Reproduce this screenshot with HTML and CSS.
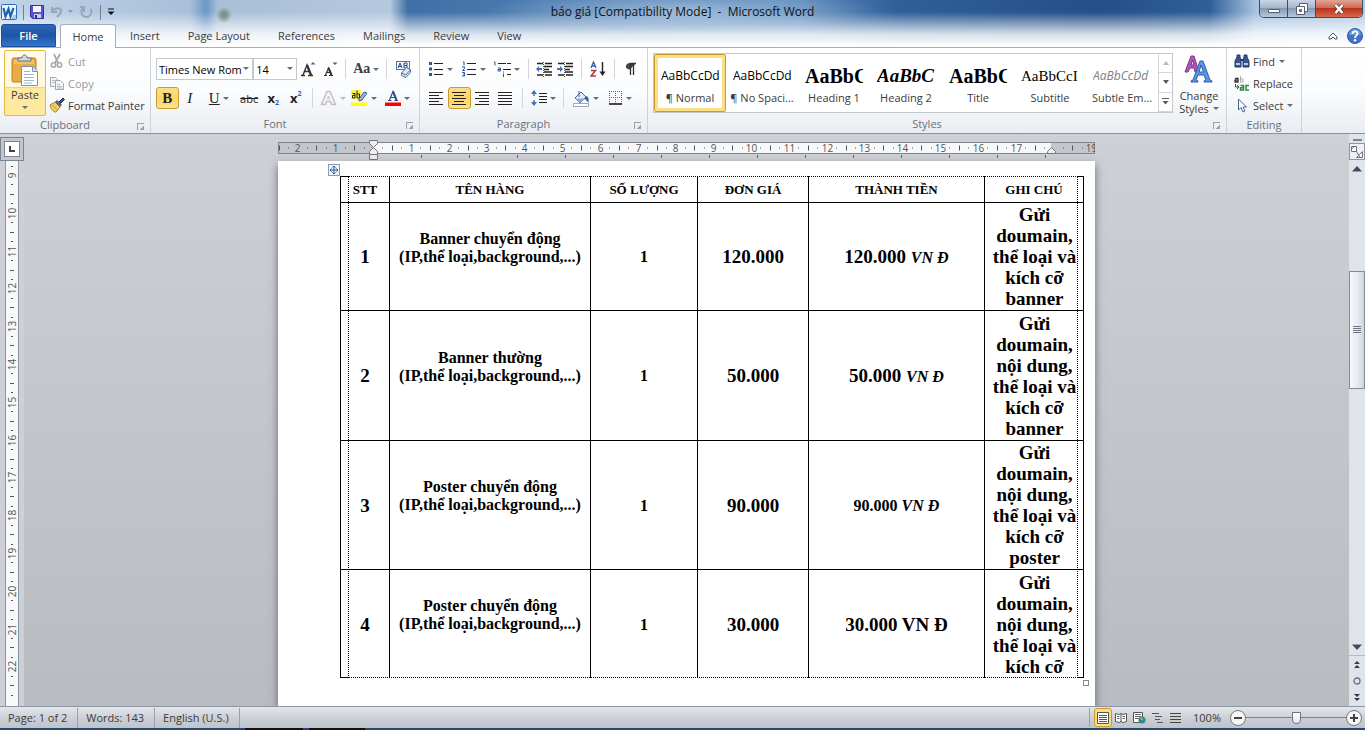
FILE: index.html
```html
<!DOCTYPE html>
<html lang="vi">
<head>
    <meta charset="UTF-8">
    <title>báo giá [Compatibility Mode] - Microsoft Word</title>
    <link rel="stylesheet" href="styles.css">
</head>
<body>
    <header class="titlebar">
        <div class="quick">
            <svg class="logo" width="16" height="16" viewBox="0 0 16 16"><rect x=".5" y=".5" width="15" height="15" rx="1" fill="#eaf3fc" stroke="#2b6cb8"/><path d="M2.500 4l2 8.500 3-7.500 2 7.500L12.500 4" fill="none" stroke="#1b62b5" stroke-width="2.200"/><path d="M11 14h4M12 12h3" stroke="#5b9bd8"/></svg>
            <i class="qsep"></i>
            <button title="Save"><svg width="14" height="14" viewBox="0 0 14 14"><path d="M.5.5h13v13h-11l-2-2z" fill="#5a55c4" stroke="#37338f"/><path d="M3 1h8v6H3z" fill="#f3f6ff"/><path d="M4 9h7v4H4z" fill="#c9cdf0"/><path d="M5 10h2v3H5z" fill="#2f2b80"/></svg></button>
            <button class="undo" title="Undo"><svg width="24" height="14" viewBox="0 0 24 14"><path d="M2 2v5h5M2.500 6C5 2.500 11 2 11 6c0 3-2 4-4 6" fill="none" stroke="#9aa5b5" stroke-width="2"/><path d="M18 5h5l-2.500 3z" fill="#8d97a6"/></svg></button>
            <button title="Repeat"><svg width="14" height="14" viewBox="0 0 14 14"><path d="M4 2.500a5 5 0 1 0 6.500 1.500M4 7V2H0" fill="none" stroke="#9aa5b5" stroke-width="2"/></svg></button>
            <i class="qsep"></i>
            <button title="Customize"><svg width="8" height="8" viewBox="0 0 8 8"><path d="M1 1h6" stroke="#111"/><path d="M.5 3.500h7L4 7z" fill="#111"/></svg></button>
        </div>
        <div class="caption">báo giá [Compatibility Mode] &nbsp;- &nbsp;Microsoft Word</div>
        <div class="winbtns">
            <button title="Minimize"><svg width="12" height="12" viewBox="0 0 12 12"><path d="M.5 6.500h11v3H.5z" fill="#fff" stroke="#555f70"/></svg></button>
            <button title="Restore"><svg width="12" height="12" viewBox="0 0 12 12"><path d="M3.500.5h8v8h-8z" fill="#fff" stroke="#555f70"/><path d="M.5 3.500h8v8h-8z" fill="#fff" stroke="#555f70"/><path d="M3.500 6.500h2v2h-2z" fill="#8a94a5" stroke="#555f70"/></svg></button>
            <button class="close" title="Close"><svg width="12" height="12" viewBox="0 0 12 12"><path d="M2.500 2l7 8M9.500 2l-7 8" stroke="#5b3434" stroke-width="4"/><path d="M2.500 2l7 8M9.500 2l-7 8" stroke="#fff" stroke-width="2.500"/></svg></button>
        </div>
    </header>

    <nav class="tabs">
        <button class="file">File</button>
        <button class="active">Home</button>
        <button>Insert</button>
        <button>Page Layout</button>
        <button>References</button>
        <button>Mailings</button>
        <button>Review</button>
        <button>View</button>
        <span class="tabtools">
            <button title="Minimize the Ribbon"><svg width="10" height="8" viewBox="0 0 10 8"><path d="M1 5l4-4 4 4v2H7L5 5 3 7H1z" fill="#fff" stroke="#4a5260"/></svg></button>
            <button title="Help"><svg width="16" height="16" viewBox="0 0 16 16"><circle cx="8" cy="8" r="7.500" fill="#3f74c9" stroke="#2c5aa5"/><path d="M2 7a6 6 0 0 1 12 0z" fill="#6b9ae0"/><path d="M5.500 6c0-3.500 5-3.500 5-.5C10.500 7.500 8 7.500 8 10" fill="none" stroke="#fff" stroke-width="1.800"/><circle cx="8" cy="12.300" r="1.200" fill="#fff"/></svg></button>
        </span>
    </nav>

    <section class="ribbon">
        <div class="group clipboard">
            <div class="gbody">
                <button class="paste">
                    <svg width="30" height="32" viewBox="0 0 30 32"><rect x="2" y="4" width="24" height="24" rx="1.500" fill="#e9ab45" stroke="#bd8024"/><path d="M4 6h20v4H4z" fill="#f1c06b"/><path d="M8 7V4h4c0-4 5-4 5 0h4v3z" fill="#d7dbe2" stroke="#68707e"/><path d="M11.500 12.500h11l5 5v14h-16z" fill="#fff" stroke="#7690b6"/><path d="M22.500 12.500v5h5" fill="#dbe6f4" stroke="#7690b6"/><path d="M14 17.500h6M14 20.500h10M14 23.500h10M14 26.500h10M14 29h8" stroke="#9fb3cf"/></svg>
                    <span class="dd">Paste</span>
                </button>
                <div class="stack">
                    <button class="off"><svg width="16" height="16" viewBox="0 0 16 16"><path d="M5 1l4 9M11 1L6 10" stroke="#a3a8af" stroke-width="1.800"/><circle cx="4.500" cy="12" r="2.200" fill="none" stroke="#a3a8af" stroke-width="1.500"/><circle cx="10.500" cy="12" r="2.200" fill="none" stroke="#a3a8af" stroke-width="1.500"/></svg>Cut</button>
                    <button class="off"><svg width="16" height="16" viewBox="0 0 16 16"><path d="M1.500 2.500h5l2 2v7h-7z" fill="#f4f5f7" stroke="#a3a8af"/><path d="M6.500 5.500h5l3 3v6h-8z" fill="#f4f5f7" stroke="#a3a8af"/><path d="M3 5.500h3M3 7.500h3M8 9.500h3M8 11.500h5M8 13h5" stroke="#b5b9c0"/></svg>Copy</button>
                    <button><svg width="16" height="16" viewBox="0 0 16 16"><path d="M1 8l5-3 5 5-4 5c-2 .5-5-2-6-7z" fill="#f0cf62" stroke="#a98527"/><path d="M3 8l5 5" stroke="#c79f37"/><path d="M6 5l2-2 5 5-2 2z" fill="#5c6575"/><path d="M10 5l4-4 1.500 1.500-4 4z" fill="#3f4f86" stroke="#26336b"/></svg>Format Painter</button>
                </div>
            </div>
            <div class="gtitle">Clipboard<i class="launch"></i></div>
        </div>

        <div class="group font">
            <div class="gbody rows">
                <div class="row">
                    <label class="combo name"><select aria-label="Font"><option>Times New Rom</option></select></label>
                    <label class="combo size"><select aria-label="Font size"><option>14</option></select></label>
                    <button class="ib w22" title="Grow Font"><svg width="16" height="16" viewBox="0 0 16 16"><path d="M1 14.500h4M8 14.500h5M3 14L7 4l4 10M4.500 10.500h5" fill="none" stroke="#333" stroke-width="1.400"/><path d="M7 4l4 10" stroke="#333" stroke-width="2.200"/><path d="M10.500 3.500h5L13 1z" fill="#3b62a8"/></svg></button>
                    <button class="ib w22" title="Shrink Font"><svg width="16" height="16" viewBox="0 0 16 16"><path d="M2 14.500h3M7 14.500h4M3.500 14L6.500 7l3 7M4.500 11.500h4" fill="none" stroke="#333" stroke-width="1.200"/><path d="M6.500 7l3 7" stroke="#333" stroke-width="2"/><path d="M10.500 1.500h5L13 4z" fill="#3b62a8"/></svg></button>
                    <i class="sep"></i>
                    <button class="ib dd aa" title="Change Case">Aa</button>
                    <i class="sep"></i>
                    <button class="ib w22" title="Clear Formatting"><svg width="17" height="17" viewBox="0 0 17 17"><rect x="1.500" y=".5" width="13" height="8" fill="#f5f8fd" stroke="#5873a5"/><path d="M3 7l2-5 2 5M3.500 5.500h3M9 7V2h3v2.500H9M12 4.500V7H9" fill="none" stroke="#2b4d8c"/><path d="M6.500 12l5-5.500 4 2v3l-4.500 5-4.500-2z" fill="#dfe6f3" stroke="#5873a5"/><path d="M6.500 12l4.500 2 4.500-5.500" fill="none" stroke="#5873a5"/></svg></button>
                </div>
                <div class="row">
                    <button class="ib on serif" title="Bold"><b>B</b></button>
                    <button class="ib serif" title="Italic"><i>I</i></button>
                    <button class="ib serif dd w36" title="Underline"><u>U</u></button>
                    <button class="ib w26 strike" title="Strikethrough"><s>abc</s></button>
                    <button class="ib xx" title="Subscript">x<sub>2</sub></button>
                    <button class="ib xx" title="Superscript">x<sup>2</sup></button>
                    <i class="sep"></i>
                    <button class="ib dd w30 off" title="Text Effects"><svg width="17" height="16" viewBox="0 0 17 16"><path d="M1.500 14.500L7 1.500h3l5.500 13h-4l-1-3h-4l-1 3z" fill="#f6f6f6" stroke="#bfc1c5" stroke-width="1.500"/><path d="M7.500 9h2l-1-3z" fill="#fff" stroke="#bfc1c5"/></svg></button>
                    <button class="ib dd w34" title="Highlight"><svg width="17" height="17" viewBox="0 0 17 17"><path d="M0 0h10v9H0z" fill="#fff44a"/><path d="M1.500 3.500h2.500V8H1.500V5.500H4M6 .5V8h2.500V4H6" fill="none" stroke="#222"/><path d="M8 9l5-7 3 1-5 7-3 1z" fill="#9cb3d8" stroke="#3f5c94"/><path d="M0 12.500h16V16H0z" fill="#ff0"/></svg></button>
                    <button class="ib dd w34" title="Font Color"><svg width="16" height="17" viewBox="0 0 16 17"><path d="M3 10.500h3.500M9.500 10.500H13M4.500 10L8 1.500 11.500 10M5.500 7.500h5" fill="none" stroke="#2c4f8f" stroke-width="1.200"/><path d="M8 1.500l3.500 8.500" stroke="#2c4f8f" stroke-width="2"/><path d="M0 12.500h16V16H0z" fill="#f00"/></svg></button>
                </div>
            </div>
            <div class="gtitle">Font<i class="launch"></i></div>
        </div>

        <div class="group para">
            <div class="gbody rows">
                <div class="row">
                    <button class="ib dd w34" title="Bullets"><svg width="15" height="14" viewBox="0 0 15 14"><path d="M0 0h3v3H0zM0 5.500h3v3H0zM0 11h3v3H0z" fill="#2f5597"/><path d="M5 1.500h9M5 7.500h9M5 12.500h9" stroke="#222"/></svg></button>
                    <button class="ib dd w34" title="Numbering"><svg width="15" height="16" viewBox="0 0 15 16"><path d="M1 1h1v3.500M0 6h2.500v1.500L.5 9.500H3M0 11.500h2.500v3.500H0M1 13.300h1" fill="none" stroke="#2f5597"/><path d="M5 2.500h9M5 8.500h9M5 13.500h9" stroke="#222"/></svg></button>
                    <button class="ib dd w34" title="Multilevel List"><svg width="17" height="16" viewBox="0 0 17 16"><path d="M0 1h1v3.500M4 7h2.500v3H4V8.500h2M9.500 10.500v1M9.500 12.500V16" fill="none" stroke="#2f5597"/><path d="M4 2.500h13M9 8.500h8M13 13.500h4" stroke="#222" stroke-dasharray="8 1"/></svg></button>
                    <i class="sep"></i>
                    <button class="ib w22" title="Decrease Indent"><svg width="17" height="15" viewBox="0 0 17 15"><path d="M1 1.500h6M9 1.500h7M8 4.500h8M8 7.500h5M8 10h8M1 13h6M9 13h7" stroke="#222" stroke-width="1.300"/><path d="M7.500 0v15" stroke="#555" stroke-dasharray="1 1"/><path d="M0 7l3-3v2h3v2H3v2z" fill="#3f70bd"/></svg></button>
                    <button class="ib w22" title="Increase Indent"><svg width="17" height="15" viewBox="0 0 17 15"><path d="M1 1.500h6M9 1.500h7M8 4.500h8M8 7.500h5M8 10h8M1 13h6M9 13h7" stroke="#222" stroke-width="1.300"/><path d="M7.500 0v15" stroke="#555" stroke-dasharray="1 1"/><path d="M6 7L3 4v2H0v2h3v2z" fill="#3f70bd"/></svg></button>
                    <i class="sep"></i>
                    <button class="ib" title="Sort"><svg width="16" height="16" viewBox="0 0 16 16"><path d="M1 7l2.500-6L6 7M2 5h3" fill="none" stroke="#2f5fb0" stroke-width="1.300"/><path d="M1 9.500h4.500L1 15h5" fill="none" stroke="#b03a3a" stroke-width="1.500"/><path d="M12.500 1v12" stroke="#222" stroke-width="1.400"/><path d="M9.500 10.500h6L12.500 15z" fill="#222"/></svg></button>
                    <i class="sep"></i>
                    <button class="ib" title="Show Marks"><svg width="12" height="14" viewBox="0 0 12 14"><path d="M5 7.500C-1 7.500 0 1 5 1h6M5 1v6.500z" fill="#444"/><path d="M5.500 1v12M8.500 1v12M5 1.500h6" stroke="#333" stroke-width="1.300"/></svg></button>
                </div>
                <div class="row">
                    <button class="ib" title="Align Left"><svg width="15" height="13" viewBox="0 0 15 13"><path d="M0 .5h14M0 3.500h10M0 6.500h14M0 9.500h10M0 12.500h14" stroke="#222"/></svg></button>
                    <button class="ib on" title="Center"><svg width="15" height="13" viewBox="0 0 15 13"><path d="M0 .5h14M2 3.500h10M0 6.500h14M2 9.500h10M0 12.500h14" stroke="#222"/></svg></button>
                    <button class="ib" title="Align Right"><svg width="15" height="13" viewBox="0 0 15 13"><path d="M0 .5h14M4 3.500h10M0 6.500h14M4 9.500h10M0 12.500h14" stroke="#222"/></svg></button>
                    <button class="ib" title="Justify"><svg width="15" height="13" viewBox="0 0 15 13"><path d="M0 .5h14M0 3.500h14M0 6.500h14M0 9.500h14M0 12.500h14" stroke="#222"/></svg></button>
                    <i class="sep"></i>
                    <button class="ib dd w30" title="Line Spacing"><svg width="16" height="16" viewBox="0 0 16 16"><path d="M3 2v4M3 10v4" stroke="#3f70bd" stroke-width="1.500"/><path d="M0 4l3-4 3 4zM0 12l3 4 3-4z" fill="#3f70bd"/><path d="M8 3.500h8M8 6.500h8M8 9.500h8M8 12.500h8" stroke="#222"/></svg></button>
                    <i class="sep"></i>
                    <button class="ib dd w34" title="Shading"><svg width="17" height="17" viewBox="0 0 17 17"><path d="M2 8l6-6 5 5-6 6z" fill="#e4ecf8" stroke="#4a6494"/><path d="M2.500 8.500h9L7 13z" fill="#8fb0dc"/><path d="M6 1v6" stroke="#4a6494"/><path d="M13 6c3 1 3 4 2.500 7-1-2-2.500-3-4-4z" fill="#3f5f9c"/><path d="M.5 13.500h15v3H.5z" fill="#fff" stroke="#9aa5b8"/></svg></button>
                    <button class="ib dd w34" title="Borders"><svg width="14" height="14" viewBox="0 0 14 14"><path d="M.5 0v13M6.500 0v13M12.500 0v13M0 .5h13M0 6.500h13" stroke="#666" stroke-dasharray="1 1"/><path d="M0 13h13" stroke="#111" stroke-width="1.500"/></svg></button>
                </div>
            </div>
            <div class="gtitle">Paragraph<i class="launch"></i></div>
        </div>

        <div class="group styles">
            <div class="gbody">
                <div class="gallery">
                    <button class="style sel"><span class="prev">AaBbCcDd</span><span>¶ Normal</span></button>
                    <button class="style"><span class="prev">AaBbCcDd</span><span>¶ No Spaci...</span></button>
                    <button class="style"><span class="prev h1">AaBbC</span><span>Heading 1</span></button>
                    <button class="style"><span class="prev h2">AaBbC</span><span>Heading 2</span></button>
                    <button class="style"><span class="prev h1">AaBbC</span><span>Title</span></button>
                    <button class="style"><span class="prev subt">AaBbCcI</span><span>Subtitle</span></button>
                    <button class="style"><span class="prev subtle">AaBbCcDd</span><span>Subtle Em...</span></button>
                    <div class="gscroll">
                        <button class="off" title="Row up"><svg width="6" height="4" viewBox="0 0 6 4"><path d="M0 4h6L3 0z" fill="#b5b9c0"/></svg></button>
                        <button title="Row down"><svg width="6" height="4" viewBox="0 0 6 4"><path d="M0 0h6L3 4z" fill="#555c68"/></svg></button>
                        <button title="More"><svg width="7" height="7" viewBox="0 0 7 7"><path d="M0 .5h7" stroke="#555c68"/><path d="M.5 3h6l-3 3.500z" fill="#555c68"/></svg></button>
                    </div>
                </div>
                <button class="change">
                    <svg width="32" height="30" viewBox="0 0 32 30"><path d="M2 18L8 2h3l5 16h-4l-1-4H7l-2 4zM8 11h3L9.500 6z" fill="#b356b5" stroke="#7e3683" fill-rule="evenodd"/><path d="M8 28v-1l2-1 7-19h3l7 19 2 1v1h-8v-1l2-1-2-5h-6l-2 5 2 1v1zM16 18h4.500l-2.500-7z" fill="#5d95e4" stroke="#2d5fae" fill-rule="evenodd"/></svg>
                    <span>Change</span><span class="dd">Styles</span>
                </button>
            </div>
            <div class="gtitle">Styles<i class="launch"></i></div>
        </div>

        <div class="group editing">
            <div class="gbody">
                <div class="stack">
                    <button class="dd"><svg width="16" height="14" viewBox="0 0 16 14"><path d="M1 13V7l2-4V1h3v2l1 4v6zM9 13V7l1-4V1h3v2l2 4v6z" fill="#3c5590" stroke="#22386d"/><path d="M2 9h4v2H2zM10 9h4v2h-4z" fill="#b9cbea"/><path d="M7 6h2" stroke="#22386d" stroke-width="2"/></svg>Find</button>
                    <button><svg width="16" height="15" viewBox="0 0 16 15"><path d="M1 2.500h3V6H1V4.200h3" fill="none" stroke="#333" stroke-width="1.300"/><path d="M6.500 0v6H9V3H6.500" fill="none" stroke="#aaa"/><path d="M1.500 8v3H4M3 9l2 2-2 2" fill="none" stroke="#2c4f8f"/><path d="M6.500 9.500h3V14h-3v-2.200h3M15 9.500h-3V14h3" fill="none" stroke="#2c8a3c" stroke-width="1.500"/></svg>Replace</button>
                    <button class="dd"><svg width="16" height="15" viewBox="0 0 16 15"><path d="M4.500 1v11l2.500-2.500 2 4.500 2-1-2-4h3.500z" fill="#fff" stroke="#4a6494"/></svg>Select</button>
                </div>
            </div>
            <div class="gtitle">Editing</div>
        </div>
    </section>

    <main class="work">
        <div class="left">
            <button class="tabstop" title="Left Tab"><span><svg width="6" height="6" viewBox="0 0 6 6"><path d="M1 0v5h5" fill="none" stroke="#444" stroke-width="2"/></svg></span></button>
            <svg class="vruler" id="vruler"></svg>
        </div>

        <div class="canvas">
            <div class="hwrap">
                <svg class="hruler" id="hruler"></svg>
            </div>
            <article class="page">
                <div class="tablebox">
                    <span class="move"><svg width="12" height="12" viewBox="0 0 12 12"><rect x=".5" y=".5" width="11" height="11" fill="#eef3fb" stroke="#8d9ab0"/><path d="M6 2v8M2 6h8M4.500 3.500L6 2l1.500 1.500M4.500 8.500L6 10l1.500-1.500M3.500 4.500L2 6l1.500 1.500M8.500 4.500L10 6 8.500 7.500" fill="none" stroke="#2f5597"/></svg></span>
                    <table>
                        <colgroup><col class="c1"><col class="c2"><col class="c3"><col class="c4"><col class="c5"><col class="c6"></colgroup>
                        <thead>
                            <tr><th>STT</th><th>TÊN HÀNG</th><th>SỐ LƯỢNG</th><th>ĐƠN GIÁ</th><th>THÀNH TIỀN</th><th>GHI CHÚ</th></tr>
                        </thead>
                        <tbody>
                            <tr class="five">
                                <td>1</td>
                                <td class="item">Banner chuyển động<br>(IP,thể loại,background,...)</td>
                                <td class="qty">1</td>
                                <td>120.000</td>
                                <td>120.000 <em>VN Đ</em></td>
                                <td class="note">Gửi<br>doumain,<br>thể loại và<br>kích cỡ<br>banner</td>
                            </tr>
                            <tr class="six">
                                <td>2</td>
                                <td class="item">Banner thường<br>(IP,thể loại,background,...)</td>
                                <td class="qty">1</td>
                                <td>50.000</td>
                                <td>50.000 <em>VN Đ</em></td>
                                <td class="note">Gửi<br>doumain,<br>nội dung,<br>thể loại và<br>kích cỡ<br>banner</td>
                            </tr>
                            <tr class="six">
                                <td>3</td>
                                <td class="item">Poster chuyển động<br>(IP,thể loại,background,...)</td>
                                <td class="qty">1</td>
                                <td>90.000</td>
                                <td class="small">90.000 <em>VN Đ</em></td>
                                <td class="note">Gửi<br>doumain,<br>nội dung,<br>thể loại và<br>kích cỡ<br>poster</td>
                            </tr>
                            <tr class="five">
                                <td>4</td>
                                <td class="item">Poster chuyển động<br>(IP,thể loại,background,...)</td>
                                <td class="qty">1</td>
                                <td>30.000</td>
                                <td>30.000 VN Đ</td>
                                <td class="note">Gửi<br>doumain,<br>nội dung,<br>thể loại và<br>kích cỡ</td>
                            </tr>
                        </tbody>
                    </table>
                    <span class="resize"></span>
                </div>
            </article>
        </div>

        <div class="vscroll">
            <i class="split"></i>
            <button class="rtoggle" title="View Ruler"><svg width="14" height="14" viewBox="0 0 14 14"><path d="M1.500 1.500h5v5h-5zM1.500 4l3-2.500M6 6l4 6M12.500 6.500v6h-6l3-3z" fill="#fff" stroke="#6a7280"/></svg></button>
            <button title="Up"><svg width="10" height="6" viewBox="0 0 10 6"><path d="M0 5.500h10L5 0z" fill="#444b57"/></svg></button>
            <div class="track"><i class="before"></i><span class="thumb"></span><i class="after"></i></div>
            <button title="Down"><svg width="10" height="6" viewBox="0 0 10 6"><path d="M0 .5h10L5 6z" fill="#444b57"/></svg></button>
            <button class="browse first" title="Previous Page"><svg width="6" height="7" viewBox="0 0 6 7"><path d="M0 3h6L3 0zM0 7h6L3 4z" fill="#333a46"/></svg></button>
            <button class="browse" title="Select Browse Object"><svg width="8" height="8" viewBox="0 0 8 8"><circle cx="4" cy="4" r="3" fill="none" stroke="#666e7c" stroke-width="1.300"/></svg></button>
            <button class="browse" title="Next Page"><svg width="6" height="7" viewBox="0 0 6 7"><path d="M0 0h6L3 3zM0 4h6L3 7z" fill="#333a46"/></svg></button>
        </div>
    </main>

    <footer class="status">
        <span class="info">Page: 1 of 2</span>
        <span class="info">Words: 143</span>
        <span class="info">English (U.S.)</span>
        <div class="views">
            <button class="on" title="Print Layout"><svg width="12" height="12" viewBox="0 0 12 12"><path d="M.5.5h11v11H.5z" fill="#fff" stroke="#555"/><path d="M2 3.500h8M2 5.500h8M2 7.500h8M2 9.500h8" stroke="#555"/></svg></button>
            <button title="Full Screen Reading"><svg width="12" height="12" viewBox="0 0 12 12"><path d="M.5 1.500l3 1h.5l2-1 2 1 3.500-1v8l-3.500 1-2-1-2 1-3.500-1zM6 2v8" fill="#fff" stroke="#555"/><path d="M2 4.500h2.500M2 6.500h2.500M7.500 4.500H10M7.500 6.500H10" stroke="#666"/></svg></button>
            <button title="Web Layout"><svg width="13" height="12" viewBox="0 0 13 12"><path d="M.5.5h9v10h-9z" fill="#fff" stroke="#555"/><path d="M2 2.500h6M2 4.500h6M2 6.500h4" stroke="#666"/><circle cx="9" cy="8" r="3.500" fill="#2e8791"/><path d="M7 6.500l2-1 1 2-1 1z" fill="#8ecf8c"/></svg></button>
            <button title="Outline"><svg width="11" height="10" viewBox="0 0 11 10"><path d="M0 .5h8M3 3.500h7M3 6.500h5M5 9.500h6" stroke="#555" stroke-dasharray="7 1"/></svg></button>
            <button title="Draft"><svg width="11" height="10" viewBox="0 0 11 10"><path d="M0 .5h11M0 3.500h11M0 6.500h11M0 9.500h11" stroke="#444"/></svg></button>
        </div>
        <button class="pct">100%</button>
        <button class="zbtn" title="Zoom Out"><svg width="16" height="16" viewBox="0 0 16 16"><circle cx="8" cy="8" r="7.500" fill="#f4f5f7" stroke="#777"/><path d="M4 8h8" stroke="#444" stroke-width="2"/></svg></button>
        <input class="zoom" type="range" min="0" max="100" value="50" aria-label="Zoom">
        <button class="zbtn" title="Zoom In"><svg width="16" height="16" viewBox="0 0 16 16"><circle cx="8" cy="8" r="7.500" fill="#f4f5f7" stroke="#777"/><path d="M4 8h8M8 4v8" stroke="#444" stroke-width="2"/></svg></button>
    </footer>
    <div class="desktop"></div>

    <script src="script.js"></script>
</body>
</html>
```

FILE: styles.css
```css
* {
    box-sizing: border-box;
}

body {
    margin: 0;
    height: 100vh;
    display: flex;
    flex-direction: column;
    overflow: hidden;
    font-family: "Open Sans", "Noto Sans", sans-serif;
    font-size: 11px;
    color: #3b3b3b;
    background:
        radial-gradient(ellipse 200px 22px at 683px 12px, rgba(190, 212, 235, .7), transparent),
        radial-gradient(circle at 224px 15px, rgba(88, 108, 82, .6) 2px, transparent 8px),
        linear-gradient(#fff0 12px, rgba(255, 255, 255, .8) 34px, #fff 46px),
        linear-gradient(90deg, #c0d3e8 0, #a9c0da 190px, #6c97c5 206px, #a9bfd6 218px, #b4c8de 390px, #3e6fa6 408px, #4b7cb0 540px, #5a88ba 800px, #2f5f99 900px, #244f87 1100px, #2f5f99 1210px, #a9c4e0 1256px, #b5cce4);
}

button {
    display: flex;
    align-items: center;
    justify-content: center;
    padding: 0;
    border: 0;
    background: none;
    font: inherit;
    color: inherit;
}

svg {
    display: block;
    flex: none;
}

/* title bar */
.titlebar {
    display: grid;
    grid-template-columns: 1fr auto 1fr;
    height: 24px;
    flex: none;
}
.quick {
    display: flex;
    align-items: center;
    gap: 6px;
    padding-left: 1px;
}
.qsep {
    width: 1px;
    height: 15px;
    background: #6d7f97;
}
.caption {
    font-size: 12px;
    line-height: 24px;
    color: #111;
}
.winbtns {
    justify-self: end;
    display: flex;
    height: 18px;
    margin-right: 2px;
    border: 1px solid #3d4d66;
    border-top: 0;
    border-radius: 0 0 5px 5px;
    overflow: hidden;
}
.winbtns button {
    width: 28px;
    background: linear-gradient(#c9d6e6, #a5b6cc 45%, #8599b3 50%, #b6c8dd);
    border-right: 1px solid #3d4d66;
}
.winbtns .close {
    width: 46px;
    border: 0;
    background: linear-gradient(#e0a598, #cf6a55 45%, #b8331d 50%, #d8684a);
}

/* tabs */
.tabs {
    display: flex;
    height: 23px;
    flex: none;
}
.tabs > button {
    padding: 0 14px;
}
.tabs .file {
    width: 55px;
    margin: 0 4px 0 1px;
    color: #fff;
    font-weight: 600;
    border-radius: 3px 3px 0 0;
    border: 1px solid #1d4f9c;
    background: linear-gradient(#2b67b8, #1f55a6 50%, #2e76cf);
}
.tabs .active {
    width: 56px;
    position: relative;
    margin-bottom: -1px;
    background: #fff;
    border: 1px solid #a5adb8;
    border-bottom: 0;
    border-radius: 3px 3px 0 0;
}
.tabtools {
    display: flex;
    gap: 9px;
    margin-left: auto;
    margin-right: 2px;
}

/* ribbon */
.ribbon {
    display: flex;
    flex: none;
    height: 87px;
    border-top: 1px solid #a5adb8;
    border-bottom: 1px solid #8b919b;
    background: linear-gradient(#fff, #fbfcfd 50%, #e9ecf1);
}
.group {
    display: flex;
    flex-direction: column;
    border-right: 1px solid #cfd3d9;
}
.clipboard { width: 151px; }
.font { width: 269px; }
.para { width: 228px; }
.styles { width: 579px; }
.editing { width: 75px; }
.gbody {
    display: flex;
    height: 68px;
    padding: 2px 4px 0;
}
.gtitle {
    display: flex;
    justify-content: center;
    position: relative;
    padding-right: 20px;
    line-height: 18px;
    color: #6a717c;
}
.editing .gtitle {
    padding: 0;
}
.launch {
    position: absolute;
    right: 6px;
    top: 7px;
    width: 7px;
    height: 7px;
    border: 1px solid #9aa1ac;
    border-right: 0;
    border-bottom: 0;
    background: linear-gradient(135deg, transparent 60%, #9aa1ac 60%);
}
.dd::after {
    content: "";
    margin-left: 4px;
    border: 3px solid transparent;
    border-top-color: #666d78;
    border-bottom: 0;
}
.off {
    color: #9a9a9a;
}
.off.dd::after {
    border-top-color: #bbb;
}

.paste {
    flex-direction: column;
    justify-content: flex-start;
    width: 42px;
    height: 66px;
    padding-top: 3px;
    border: 1px solid #e5b93c;
    border-radius: 2px;
    background: linear-gradient(#fffbe9, #fff8dc 36px, #e5c560 36px, #fde9a0 37px, #fdea9f);
}
.paste .dd {
    display: flex;
    flex-direction: column;
    align-items: center;
    line-height: 18px;
}
.paste .dd::after {
    margin: 2px 0 0;
}
.stack {
    display: flex;
    flex-direction: column;
    padding-left: 3px;
}
.stack button {
    height: 22px;
    justify-content: flex-start;
    white-space: nowrap;
}
.stack svg {
    margin-right: 3px;
}

.rows {
    flex-direction: column;
    gap: 7px;
    padding: 10px 5px 0;
}
.row {
    display: flex;
    align-items: center;
    height: 22px;
}
.sep {
    width: 1px;
    height: 20px;
    margin: 0 5px;
    background: #d3d6db;
}
.ib {
    width: 23px;
    height: 22px;
}
.ib.dd::after { margin-left: 3px; }
.w22 { width: 22px; }
.w26 { width: 26px; }
.w30 { width: 30px; }
.w34 { width: 34px; }
.w36 { width: 36px; }
.on {
    border: 1px solid #c99a2e;
    border-radius: 3px;
    background: linear-gradient(#fbe08b, #fdd566 50%, #fbe48f);
}
.combo {
    position: relative;
    height: 22px;
}
.combo select {
    appearance: none;
    width: 100%;
    height: 22px;
    padding: 0 0 0 2px;
    border: 1px solid #c3c7ce;
    border-radius: 0;
    background: #fff;
    font: inherit;
    color: #000;
}
.combo::after {
    content: "";
    position: absolute;
    right: 4px;
    top: 9px;
    border: 3px solid transparent;
    border-top-color: #666d78;
    border-bottom: 0;
}
.name { width: 98px; }
.size { width: 44px; }
.aa {
    width: 30px;
    font: bold 14px "Liberation Serif", serif;
}
.serif {
    font: 15px "Liberation Serif", serif;
    color: #222;
}
.strike {
    font-size: 11px;
    color: #222;
}
.xx {
    font-size: 13px;
    font-weight: bold;
    color: #222;
}
.xx sub,
.xx sup {
    font-size: 7px;
    line-height: 7px;
    color: #2f5fb0;
}
.xx sub { align-self: flex-end; padding-bottom: 3px; }
.xx sup { align-self: flex-start; padding-top: 3px; }

.gallery {
    display: flex;
    height: 60px;
    margin: 3px 4px 0 1px;
    border: 1px solid #c3c7ce;
    background: #fff;
}
.style {
    flex-direction: column;
    width: 72px;
    height: 58px;
    padding-top: 2px;
    line-height: 16px;
    white-space: nowrap;
}
.style.sel {
    border: 1px solid #c99a2e;
    border-radius: 2px;
    box-shadow: inset 0 0 0 3px #fbdf84;
}
.prev {
    display: flex;
    align-items: center;
    width: 58px;
    height: 28px;
    overflow: hidden;
    color: #000;
    font-size: 12px;
}
.h1,
.h2,
.subt {
    font-family: "Liberation Serif", serif;
}
.h1 { font-size: 20px; font-weight: bold; }
.h2 { font-size: 19px; font-weight: bold; font-style: italic; }
.subt { font-size: 15px; }
.subtle { font-style: italic; color: #808080; }
.gscroll {
    display: flex;
    flex-direction: column;
    width: 14px;
    border-left: 1px solid #d3d6db;
}
.gscroll button {
    flex: 1;
    border-bottom: 1px solid #d3d6db;
}
.change {
    flex-direction: column;
    justify-content: flex-start;
    width: 44px;
    padding-top: 4px;
    line-height: 13px;
}
.change svg {
    margin-bottom: 5px;
}
.change .dd {
    display: flex;
    align-items: center;
}

/* working area */
.work {
    display: flex;
    flex: 1;
    min-height: 0;
    background: linear-gradient(#cdd0d5, #b8bbc0);
}
.left {
    display: flex;
    flex-direction: column;
    width: 24px;
    padding-top: 3px;
    background: #cdd0d6;
}
.tabstop {
    width: 24px;
    height: 24px;
    flex: none;
    border: 1px solid #7d8490;
    background: #c3c6cc;
}
.tabstop span {
    padding: 4px;
    border: 1px solid #7d8490;
    background: #fff;
}
.vruler {
    flex: 1;
    width: 14px;
    min-height: 0;
    margin: 0 5px;
    background: #f7f8fa;
    border: 1px solid #8f959f;
    border-width: 0 1px;
}
.canvas {
    flex: 1;
    display: flex;
    flex-direction: column;
    align-items: center;
    min-width: 0;
    overflow: hidden;
}
.hwrap {
    height: 27px;
    flex: none;
    padding-top: 6px;
}
.hruler {
    width: 817px;
    height: 21px;
}
.rulertext {
    font-size: 10px;
    fill: #555;
    text-anchor: middle;
}
.page {
    flex: 1;
    width: 817px;
    padding: 15px 11px 0 62px;
    background: #fff;
    box-shadow: 0 4px 8px rgba(60, 64, 72, .7);
}
.tablebox {
    position: relative;
}
.tablebox::after {
    content: "";
    position: absolute;
    top: 0;
    bottom: 0;
    left: 8px;
    right: 6px;
    border: 1px dotted #000;
}
.move {
    position: absolute;
    left: -12px;
    top: -12px;
}
.resize {
    position: absolute;
    right: -5px;
    bottom: -8px;
    width: 6px;
    height: 6px;
    border: 1px solid #888;
    background: #fff;
}
table {
    width: 100%;
    table-layout: fixed;
    border-collapse: separate;
    border-spacing: 0;
    border-left: 1px solid #000;
    background:
        linear-gradient(#000, #000) 0 0 / 8px 1px no-repeat,
        linear-gradient(#000, #000) 100% 0 / 7px 1px no-repeat,
        linear-gradient(#000, #000) 0 100% / 8px 1px no-repeat,
        linear-gradient(#000, #000) 100% 100% / 7px 1px no-repeat;
    font-family: "Liberation Serif", serif;
    font-size: 19px;
    font-weight: bold;
    color: #000;
    text-align: center;
}
.c1 { width: 49px; }
.c2 { width: 201px; }
.c3 { width: 107px; }
.c4 { width: 111px; }
.c5 { width: 176px; }
.c6 { width: 99px; }
th,
td {
    padding: 0;
    line-height: 21px;
    border-right: 1px solid #000;
    border-bottom: 1px solid #000;
}
tr:last-child td {
    border-bottom: 0;
}
th {
    height: 27px;
    font-size: 13px;
}
.five { height: 108px; }
.six { height: 130px; }
.six + .six { height: 129px; }
td.item {
    padding-bottom: 18px;
    font-size: 16px;
    line-height: 18px;
}
.qty,
.small,
td em {
    font-size: 16px;
}
.note {
    padding-left: 1px;
    white-space: nowrap;
}

/* scroll bar */
.vscroll {
    display: flex;
    flex-direction: column;
    align-items: center;
    width: 16px;
    background: #dfe3eb;
}
.split {
    width: 9px;
    height: 2px;
    margin: 5px 0 2px;
    background: #7d8490;
}
.vscroll button {
    width: 16px;
    height: 17px;
    flex: none;
}
.vscroll .rtoggle {
    border: 1px solid #8f959f;
    background: #eef0f4;
}
.track {
    flex: 1;
    display: flex;
    flex-direction: column;
    width: 16px;
}
.before { flex: 95; }
.after { flex: 252; }
.thumb {
    flex: 117;
    border: 1px solid #858c99;
    background:
        repeating-linear-gradient(#6c7480 0 1px, transparent 1px 2px) center / 8px 7px no-repeat,
        linear-gradient(90deg, #f7f9fe, #e9ecf3 50%, #cfd3da);
}
.vscroll .first {
    border-top: 1px solid #b5bac4;
}

/* status bar */
.status {
    display: flex;
    align-items: center;
    flex: none;
    height: 22px;
    padding-right: 3px;
    border-top: 1px solid #8c96a5;
    background: linear-gradient(#e3e6ea, #c9cdd3 60%, #bfc4cb);
}
.info {
    padding: 0 10px 0 8px;
    line-height: 20px;
    border-right: 1px solid #9aa0aa;
}
.views {
    display: flex;
    align-items: center;
    margin-left: auto;
    padding-left: 4px;
    border-left: 1px solid #9aa0aa;
}
.views button {
    width: 18px;
    height: 19px;
}
.pct {
    width: 46px;
}
.zoom {
    appearance: none;
    width: 100px;
    height: 16px;
    margin: 0;
    background: linear-gradient(#7d8490, #7d8490) center / 100% 1px no-repeat;
}
.zoom::-webkit-slider-thumb {
    appearance: none;
    width: 9px;
    height: 12px;
    background: linear-gradient(#fff, #e5e7eb);
    border: 1px solid #6c7480;
    border-radius: 1px 1px 5px 5px;
}
.desktop {
    height: 2px;
    flex: none;
    background: linear-gradient(90deg, #28486b 245px, #111 245px 303px, #28486b 303px 309px, #111 309px 365px, #28486b 365px);
}
```

FILE: script.js
```js
// Ruler marks: one centimetre is 37.8px wide at 100% zoom
const CM = 37.8;
const NS = 'http://www.w3.org/2000/svg';

function add(svg, name, attrs, text) {
    const el = document.createElementNS(NS, name);
    for (const key in attrs) el.setAttribute(key, attrs[key]);
    if (text !== undefined) el.textContent = text;
    svg.appendChild(el);
}

function drawHorizontal() {
    const svg = document.getElementById('hruler');
    const zero = 95;
    add(svg, 'rect', { x: 0.5, y: 2.5, width: 816, height: 11, fill: '#c3c6cc', stroke: '#7d8490' });
    add(svg, 'rect', { x: zero, y: 3, width: 678, height: 10, fill: '#f7f8fa' });
    for (let q = -10; q <= 76; q++) {
        const x = Math.round(zero + q * CM / 4) + 0.5;
        const n = Math.abs(q / 4);
        if (x < 1 || x > 816 || q === 0 || q === 72) continue;
        if (q % 4 === 0) {
            add(svg, 'text', { x: x, y: 12, class: 'rulertext' }, n);
        } else {
            const h = q % 2 === 0 ? 3 : 1;
            add(svg, 'path', { d: `M${x} ${8.5 - h}v${h * 2 - 1}`, stroke: '#555' });
        }
    }
    // default tab stops
    for (let x = zero + 48.5; x < 780; x += 48) {
        add(svg, 'path', { d: `M${x} 15v3`, stroke: '#666' });
    }
    add(svg, 'path', { d: 'M91.500.5h8v3l-4 4-4-4zM91.500 14.500v-3l4-4 4 4v3zM91.500 14.500h8v5h-8z', fill: '#eee', stroke: '#777' });
    add(svg, 'path', { d: 'M769.500 13.500v-2l4-4 4 4v2z', fill: '#eee', stroke: '#777' });
}

function drawVertical() {
    const svg = document.getElementById('vruler');
    for (let q = -1; q <= 55; q++) {
        const y = Math.round(14 + q * CM / 4) + 0.5;
        if (q % 4 === 0) {
            add(svg, 'text', { x: 0, y: 0, class: 'rulertext', transform: `translate(10 ${y}) rotate(-90)` }, 9 + q / 4);
        } else {
            const h = q % 2 === 0 ? 2 : 1;
            add(svg, 'path', { d: `M${6 - h} ${y}h${h * 2}`, stroke: '#555' });
        }
    }
}

drawHorizontal();
drawVertical();
```
